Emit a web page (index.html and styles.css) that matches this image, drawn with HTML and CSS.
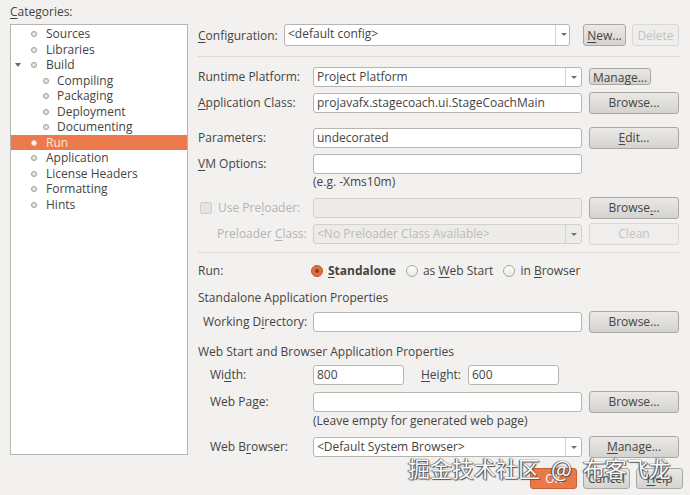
FILE: index.html
```html
<!DOCTYPE html>
<html lang="en">
<head>
    <meta charset="UTF-8">
    <title>Project Properties - Run</title>
    <link rel="stylesheet" href="styles.css">
</head>
<body>
    <div class="main">
        <div class="sidebar">
            <div class="cat-label"><u>C</u>ategories:</div>
            <ul class="tree">
                <li class="node"><span class="bullet"></span>Sources</li>
                <li class="node"><span class="bullet"></span>Libraries</li>
                <li class="node"><span class="twisty"></span><span class="bullet"></span>Build</li>
                <li class="node child"><span class="bullet"></span>Compiling</li>
                <li class="node child"><span class="bullet"></span>Packaging</li>
                <li class="node child"><span class="bullet"></span>Deployment</li>
                <li class="node child"><span class="bullet"></span>Documenting</li>
                <li class="node selected"><span class="bullet"></span>Run</li>
                <li class="node"><span class="bullet"></span>Application</li>
                <li class="node"><span class="bullet"></span>License Headers</li>
                <li class="node"><span class="bullet"></span>Formatting</li>
                <li class="node"><span class="bullet"></span>Hints</li>
            </ul>
        </div>

        <div class="panel">
            <div class="row config-row">
                <label class="config-label"><u>C</u>onfiguration:</label>
                <div class="combo config-combo"><span class="value">&lt;default config&gt;</span><span class="arrow"></span></div>
                <button class="btn new-btn"><u>N</u>ew...</button>
                <button class="btn delete-btn" disabled>Delete</button>
            </div>
            <div class="sep sep-top"></div>

            <div class="row runtime-row">
                <label>Runtime Platform:</label>
                <div class="combo field"><span class="value">Project Platform</span><span class="arrow"></span></div>
                <button class="btn small-btn">Manage...</button>
            </div>
            <div class="row appclass-row">
                <label><u>A</u>pplication Class:</label>
                <div class="input field">projavafx.stagecoach.ui.StageCoachMain</div>
                <button class="btn">Browse...</button>
            </div>
            <div class="row params-row">
                <label>Parameters:</label>
                <div class="input field">undecorated</div>
                <button class="btn"><u>E</u>dit...</button>
            </div>
            <div class="row vm-row">
                <label><u>V</u>M Options:</label>
                <div class="input field"></div>
            </div>
            <div class="hint">(e.g. -Xms10m)</div>
            <div class="row preloader-row disabled">
                <label class="check-label"><span class="checkbox"></span>Use Pre<u>l</u>oader:</label>
                <div class="input field off"></div>
                <button class="btn">Browse<u>.</u>..</button>
            </div>
            <div class="row preclass-row disabled">
                <label class="indent-lg">Preloader <u>C</u>lass:</label>
                <div class="combo field off"><span class="value">&lt;No Preloader Class Available&gt;</span><span class="arrow"></span></div>
                <button class="btn" disabled>Clean</button>
            </div>
            <div class="sep sep-mid"></div>

            <div class="row run-row">
                <label>Run:</label>
                <div class="radios">
                    <span class="radio on"></span><span class="radio-text bold"><u>S</u>tandalone</span>
                    <span class="radio"></span><span class="radio-text">as <u>W</u>eb Start</span>
                    <span class="radio"></span><span class="radio-text">in <u>B</u>rowser</span>
                </div>
            </div>

            <div class="heading standalone-heading">Standalone Application Properties</div>
            <div class="row workdir-row">
                <label class="indent-sm">Working D<u>i</u>rectory:</label>
                <div class="input field"></div>
                <button class="btn">Browse...</button>
            </div>

            <div class="heading webstart-heading">Web Start and Browser Application Properties</div>
            <div class="row size-row">
                <label class="indent-md">Wi<u>d</u>th:</label>
                <div class="input short">800</div>
                <label class="height-label"><u>H</u>eight:</label>
                <div class="input short">600</div>
            </div>
            <div class="row webpage-row">
                <label class="indent-md">Web Pa<u>g</u>e:</label>
                <div class="input field"></div>
                <button class="btn">Browse...</button>
            </div>
            <div class="hint hint-tight">(Leave empty for generated web page)</div>
            <div class="row browser-row">
                <label class="indent-md">Web B<u>r</u>owser:</label>
                <div class="combo field"><span class="value">&lt;Default System Browser&gt;</span><span class="arrow"></span></div>
                <button class="btn"><u>M</u>anage...</button>
            </div>
        </div>
    </div>

    <div class="footer">
        <button class="btn ok-btn">OK</button>
        <button class="btn foot-btn">Cancel</button>
        <button class="btn foot-btn"><u>H</u>elp</button>
    </div>

    <div class="watermark">掘金技术社区 @ 布客飞龙</div>
</body>
</html>
```

FILE: styles.css
```css
body {
    margin: 0;
    background-color: #f2f1f0;
    color: #45443f;
    font-family: 'Open Sans', 'Liberation Sans', sans-serif;
    font-size: 12px;
    width: 690px;
    height: 495px;
    position: relative;
    overflow: hidden;
}
u {
    text-decoration: underline;
    text-underline-offset: 2px;
}
.main {
    display: flex;
    height: 456px;
}

/* left tree */
.sidebar {
    width: 178px;
    margin-left: 10px;
}
.cat-label {
    height: 24px;
    line-height: 24px;
}
.tree {
    list-style: none;
    margin: 0;
    padding: 1px 0 0 0;
    border: 1px solid #b7b5b0;
    background-color: #fff;
    box-sizing: border-box;
    height: 431px;
}
.node {
    position: relative;
    height: 15.5px;
    line-height: 15.5px;
    padding-left: 35px;
    white-space: nowrap;
}
.node.child {
    padding-left: 46px;
}
.bullet {
    position: absolute;
    left: 20px;
    top: 5px;
    width: 4px;
    height: 4px;
    border-radius: 50%;
    border: 1px solid #9c9a96;
    background-color: #e6e5e2;
}
.child .bullet {
    left: 32px;
}
.twisty {
    position: absolute;
    left: 4px;
    top: 6px;
    border-left: 3px solid transparent;
    border-right: 3px solid transparent;
    border-top: 4px solid #6a6965;
}
.node.selected {
    background-color: #ec7a4c;
    color: #fde6da;
}
.selected .bullet {
    background-color: #fff;
    border-color: #f7c7b1;
}

/* right form */
.panel {
    margin-left: 10px;
    width: 482px;
    padding-top: 24px;
}
.row {
    display: flex;
    align-items: center;
    height: 21px;
}
.row label {
    width: 115px;
    flex-shrink: 0;
    white-space: nowrap;
}
.input, .combo {
    height: 20px;
    box-sizing: border-box;
    border: 1px solid #b8b5b0;
    border-radius: 3px;
    background-color: #fff;
    line-height: 18px;
    padding-left: 3px;
    white-space: nowrap;
    overflow: hidden;
}
.field {
    width: 269px;
}
.combo {
    display: flex;
    padding-left: 0;
}
.combo .value {
    flex: 1;
    padding-left: 3px;
    overflow: hidden;
}
.combo .arrow {
    width: 15px;
    border-left: 1px solid #d6d4d0;
    position: relative;
}
.combo .arrow::after {
    content: "";
    position: absolute;
    left: 5px;
    top: 8px;
    border-left: 3px solid transparent;
    border-right: 3px solid transparent;
    border-top: 3px solid #6f6e6a;
}
.btn {
    font-family: inherit;
    font-size: 12px;
    color: #45443f;
    height: 22px;
    width: 90px;
    margin-left: 7px;
    padding: 0;
    border: 1px solid #aaa8a3;
    border-radius: 3px;
    background: linear-gradient(#eae9e6, #d5d3cf);
    box-sizing: border-box;
}
.btn:disabled {
    color: #c4c2be;
    border-color: #d9d7d3;
    background: #efeeec;
}

.config-row {
    height: 22px;
}
.config-label {
    width: 86px !important;
}
.config-combo {
    width: 286px;
    height: 22px;
}
.config-combo .arrow {
    width: 13px;
}
.new-btn {
    width: 43px;
    margin-left: 13px;
}
.delete-btn {
    width: 47px;
    margin-left: 6px;
}
.sep {
    height: 1px;
    background-color: #dddbd7;
}
.sep-top {
    margin-top: 10px;
}
.sep-mid {
    margin-top: 8px;
}
.runtime-row {
    margin-top: 9px;
}
.small-btn {
    width: 62px;
    height: 17px;
}
.appclass-row {
    margin-top: 5px;
}
.params-row {
    margin-top: 14px;
}
.vm-row {
    margin-top: 5px;
}
.hint {
    height: 16px;
    line-height: 16px;
    padding-left: 115px;
}
.hint-tight {
    margin-top: 1px;
}
.preloader-row {
    margin-top: 7px;
}
.preclass-row {
    margin-top: 5px;
}
.disabled label {
    color: #b5b3af;
}
.input.off, .combo.off {
    color: #bdbbb7;
    border-color: #d3d1cd;
    background: repeating-conic-gradient(#e7e6e3 0 25%, #f2f1ef 0 50%) 0 0 / 2px 2px;
}
.check-label {
    display: flex;
    align-items: center;
    padding-left: 2px;
    box-sizing: border-box;
}
.checkbox {
    width: 10px;
    height: 10px;
    border: 1px solid #cfcdc9;
    border-radius: 2px;
    background-color: #e5e4e1;
    margin-right: 6px;
}
.indent-sm {
    padding-left: 5px;
    box-sizing: border-box;
}
.indent-md {
    padding-left: 12px;
    box-sizing: border-box;
}
.indent-lg {
    padding-left: 19px;
    box-sizing: border-box;
}

.run-row {
    margin-top: 7px;
}
.radios {
    display: flex;
    align-items: center;
    margin-left: -2px;
}
.radio {
    width: 10px;
    height: 10px;
    border-radius: 50%;
    border: 1px solid #a9a7a2;
    background: linear-gradient(#fff, #e9e8e5);
    margin-right: 5px;
    position: relative;
}
.radio.on {
    background: #e36f42;
    border-color: #b9562f;
}
.radio.on::after {
    content: "";
    position: absolute;
    left: 3px;
    top: 3px;
    width: 4px;
    height: 4px;
    border-radius: 50%;
    background-color: #8c3d1f;
}
.radio-text {
    margin-right: 10px;
}
.bold {
    font-weight: bold;
}

.heading {
    height: 16px;
    line-height: 16px;
}
.standalone-heading {
    margin-top: 9px;
}
.workdir-row {
    margin-top: 5px;
}
.webstart-heading {
    margin-top: 12px;
}
.size-row {
    margin-top: 4px;
}
.input.short {
    width: 91px;
}
.row .height-label {
    width: 64px;
    padding-left: 17px;
    box-sizing: border-box;
}
.webpage-row {
    margin-top: 6px;
}
.browser-row {
    margin-top: 7px;
}

/* bottom buttons */
.footer {
    display: flex;
    justify-content: flex-end;
    padding-right: 7px;
    margin-top: 12px;
}
.footer .btn {
    width: 47px;
    height: 21px;
    margin-left: 6px;
}
.ok-btn {
    background: #e9784a !important;
    border-color: #c85f36 !important;
    color: #fff !important;
}

.watermark {
    position: absolute;
    left: 408px;
    top: 451px;
    font-family: 'Noto Sans CJK SC', sans-serif;
    font-size: 22px;
    word-spacing: 6px;
    color: #fbfbfb;
    white-space: nowrap;
    text-shadow: 0 0 1px #3a3a3a, 1px 1px 1px #555, -1px 0 1px #555;
}
```
